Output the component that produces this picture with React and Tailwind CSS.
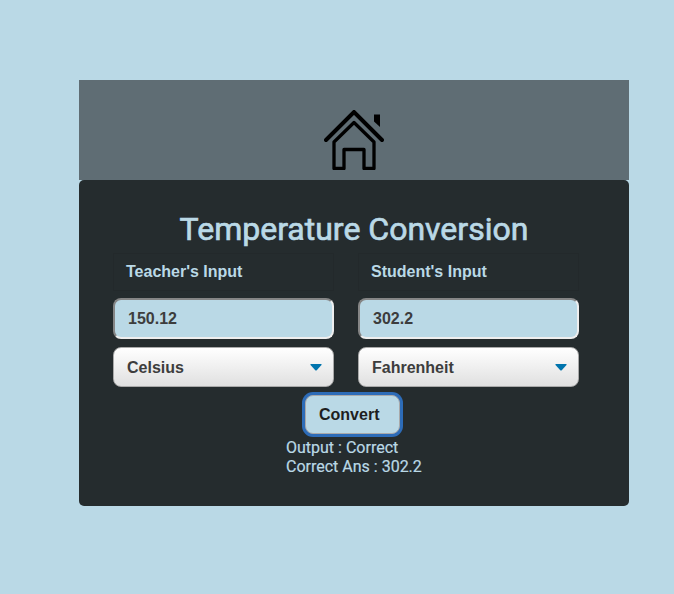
import React from "react";

function Caret() {
  return (
    <svg className="mb-px h-[7px] w-[12px]" viewBox="0 0 12 7" fill="#0074ad">
      <path d="M.5 0h11v1L6.500 6.500h-1L.5 1z" />
    </svg>
  );
}

function Field({ label, value, unit }) {
  return (
    <div className="w-[221px] font-['Liberation_Sans',Arial,sans-serif] text-[16px] font-bold">
      <div className="flex h-[38px] items-center border border-[#23292b] pl-[12px] text-[#bad9e6]">
        {label}
      </div>
      <input
        readOnly
        value={value}
        className="mt-[7px] block h-[41px] w-full rounded-[8px] border-2 border-t-[#858585] border-r-[#eeeeee] border-b-[#eeeeee] border-l-[#858585] bg-[#bad9e6] pl-[13px] text-[#3d3d3d] outline-none"
      />
      <button className="mt-2 flex h-[40px] w-full items-center justify-between rounded-[8px] border border-[#a9a9a9] bg-linear-to-b from-white to-[#e0e0e0] pt-px pr-[11px] pl-[13px] text-[#3d3d3d]">
        {unit}
        <Caret />
      </button>
    </div>
  );
}

export default function App() {
  return (
    <main className="min-h-screen bg-[#bad9e6] pt-20 pl-[79px] font-[Roboto,sans-serif] text-[#bad9e6]">
      <header className="flex h-[100px] w-[550px] justify-center bg-[#5f6d74] pt-[30px]">
        <svg className="h-[60px] w-[60px]" viewBox="0 0 60 60" fill="none" stroke="#000">
          <path d="M2 30L30 2l28 28" strokeWidth="4" strokeLinecap="round" />
          <path d="M10 32L30 12.500 50 32v26.500H40V39.500H20v19H10z" strokeWidth="3.3" strokeLinejoin="round" />
          <path d="M50 4.500h6v12.500l-6-5.500z" fill="#000" stroke="none" />
        </svg>
      </header>
      <section className="h-[326px] w-[550px] rounded-[5px] bg-[#252c2e] pt-[30px]">
        <h1 className="text-center text-[32px] leading-[38px] [-webkit-text-stroke:0.7px_#bad9e6]">
          Temperature Conversion
        </h1>
        <div className="mt-[5px] flex gap-6 pl-[34px]">
          <Field label="Teacher's Input" value="150.12" unit="Celsius" />
          <Field label="Student's Input" value="302.2" unit="Fahrenheit" />
        </div>
        <button className="mt-2 ml-[226px] flex h-[39px] w-[95px] items-center rounded-[8px] border border-[#a9a9a9] bg-[#bad9e6] pl-[13px] font-['Liberation_Sans',Arial,sans-serif] text-[16px] font-bold text-[#1e1e1e] ring-3 ring-[#2d6cb8]">
          Convert
        </button>
        <div className="mt-1 ml-[207px] text-[16px] leading-[19px] [-webkit-text-stroke:0.2px_#bad9e6]">
          <p>Output : Correct</p>
          <p>Correct Ans : 302.2</p>
        </div>
      </section>
    </main>
  );
}
